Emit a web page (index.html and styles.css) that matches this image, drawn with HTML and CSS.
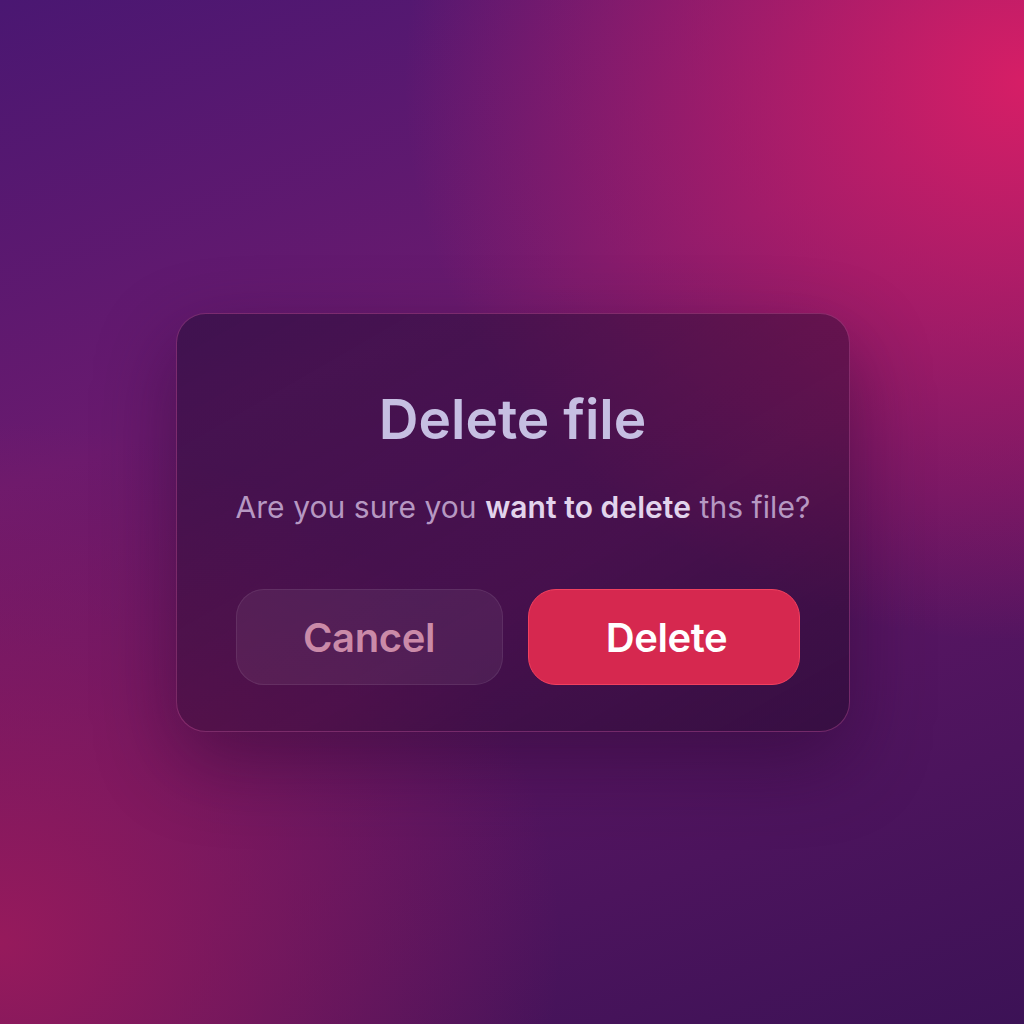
FILE: index.html
```html
<!DOCTYPE html>
<html lang="en">
<head>
<meta charset="utf-8">
<title>Delete file</title>
<link rel="stylesheet" href="styles.css">
</head>
<body>
<main class="stage">
  <section class="dialog" role="dialog" aria-labelledby="dlg-title">
    <h1 class="title" id="dlg-title">Delete file</h1>
    <p class="message">Are you sure you <strong>want to delete</strong> ths file?</p>
    <div class="actions">
      <button class="btn btn-cancel">Cancel</button>
      <button class="btn btn-delete">Delete</button>
    </div>
  </section>
</main>
</body>
</html>
```

FILE: styles.css
```css
* { box-sizing: border-box; }
html, body { margin: 0; padding: 0; }
body {
  width: 1024px;
  height: 1024px;
  font-family: "Inter", "Noto Sans", sans-serif;
  background:
    radial-gradient(ellipse 620px 560px at 100% 8%, rgba(214,30,102,1) 0%, rgba(214,30,102,0) 100%),
    radial-gradient(ellipse 560px 520px at 0% 92%, rgba(150,26,92,1) 0%, rgba(150,26,92,0) 100%),
    linear-gradient(160deg, #4a1772 0%, #6a1a6e 35%, #5c1664 60%, #3c1256 100%);
  overflow: hidden;
}
.stage {
  height: 1024px;
  display: flex;
  flex-direction: column;
  align-items: center;
  padding-top: 313px;
}
.dialog {
  width: 674px;
  height: 419px;
  margin-left: 1px;
  border-radius: 30px;
  border: 1px solid rgba(255, 110, 190, 0.28);
  background: linear-gradient(150deg, rgba(32, 12, 52, 0.52) 0%, rgba(42, 10, 48, 0.46) 60%, rgba(34, 10, 44, 0.55) 100%);
  box-shadow: 0 30px 80px rgba(35, 6, 45, 0.45);
  display: flex;
  flex-direction: column;
  align-items: stretch;
  padding: 73px 49px 0 59px;
}
.title {
  margin: 0;
  text-align: center;
  font-size: 55px;
  line-height: 64px;
  font-weight: 600;
  letter-spacing: 0;
  color: #c6bfe2;
  padding-right: 10px;
}
.message {
  margin: 38px 0 0;
  text-align: center;
  font-size: 30px;
  line-height: 36px;
  font-weight: 400;
  letter-spacing: 0.002em;
  color: #b698c2;
  white-space: nowrap;
  padding-right: 4px;
}
.message strong {
  font-weight: 600;
  color: #e2d4ec;
}
.actions {
  margin-top: 64px;
  display: flex;
  gap: 25px;
}
.btn {
  height: 96px;
  border-radius: 28px;
  font-family: inherit;
  font-size: 40px;
  font-weight: 600;
  letter-spacing: -0.01em;
  cursor: pointer;
}
.btn-cancel {
  width: 267px;
  background: rgba(255, 255, 255, 0.06);
  border: 1.5px solid rgba(255, 255, 255, 0.08);
  color: #ca8aa8;
}
.btn-delete {
  width: 272px;
  padding-left: 12px;
  background: #d6284f;
  border: 1.5px solid #f2405f;
  color: #ffffff;
}
```
